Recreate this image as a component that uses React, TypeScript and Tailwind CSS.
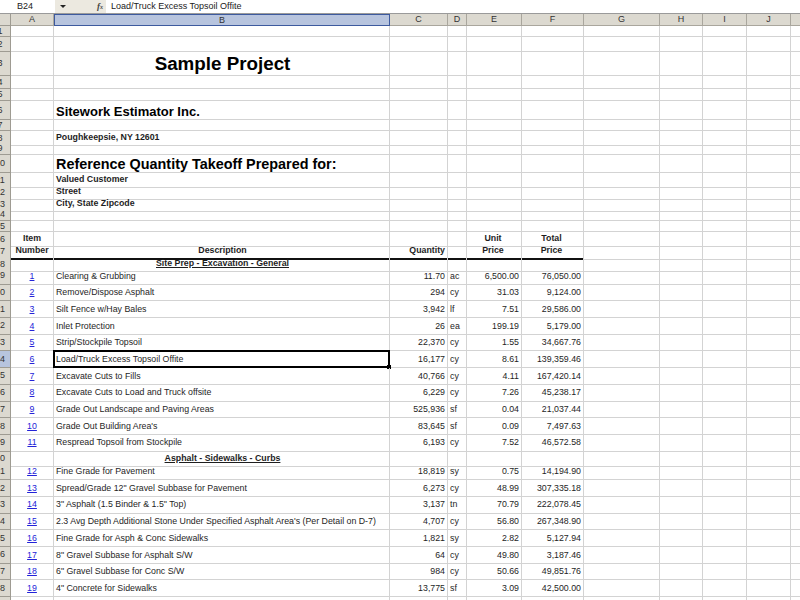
import React from 'react';

type Item = {
  n: number;
  desc: string;
  qty: string;
  unit: string;
  price: string;
  total: string;
};

const sitePrep: Item[] = [
  { n: 1, desc: 'Clearing & Grubbing', qty: '11.70', unit: 'ac', price: '6,500.00', total: '76,050.00' },
  { n: 2, desc: 'Remove/Dispose Asphalt', qty: '294', unit: 'cy', price: '31.03', total: '9,124.00' },
  { n: 3, desc: 'Silt Fence w/Hay Bales', qty: '3,942', unit: 'lf', price: '7.51', total: '29,586.00' },
  { n: 4, desc: 'Inlet Protection', qty: '26', unit: 'ea', price: '199.19', total: '5,179.00' },
  { n: 5, desc: 'Strip/Stockpile Topsoil', qty: '22,370', unit: 'cy', price: '1.55', total: '34,667.76' },
  { n: 6, desc: 'Load/Truck Excess Topsoil Offite', qty: '16,177', unit: 'cy', price: '8.61', total: '139,359.46' },
  { n: 7, desc: 'Excavate Cuts to Fills', qty: '40,766', unit: 'cy', price: '4.11', total: '167,420.14' },
  { n: 8, desc: 'Excavate Cuts to Load and Truck offsite', qty: '6,229', unit: 'cy', price: '7.26', total: '45,238.17' },
  { n: 9, desc: 'Grade Out Landscape and Paving Areas', qty: '525,936', unit: 'sf', price: '0.04', total: '21,037.44' },
  { n: 10, desc: "Grade Out Building Area's", qty: '83,645', unit: 'sf', price: '0.09', total: '7,497.63' },
  { n: 11, desc: 'Respread Topsoil from Stockpile', qty: '6,193', unit: 'cy', price: '7.52', total: '46,572.58' },
];

const asphalt: Item[] = [
  { n: 12, desc: 'Fine Grade for Pavement', qty: '18,819', unit: 'sy', price: '0.75', total: '14,194.90' },
  { n: 13, desc: 'Spread/Grade 12" Gravel Subbase for Pavement', qty: '6,273', unit: 'cy', price: '48.99', total: '307,335.18' },
  { n: 14, desc: '3" Asphalt (1.5 Binder & 1.5" Top)', qty: '3,137', unit: 'tn', price: '70.79', total: '222,078.45' },
  { n: 15, desc: "2.3 Avg Depth Additional Stone Under Specified Asphalt Area's (Per Detail on D-7)", qty: '4,707', unit: 'cy', price: '56.80', total: '267,348.90' },
  { n: 16, desc: 'Fine Grade for Asph & Conc Sidewalks', qty: '1,821', unit: 'sy', price: '2.82', total: '5,127.94' },
  { n: 17, desc: '8" Gravel Subbase for Asphalt S/W', qty: '64', unit: 'cy', price: '49.80', total: '3,187.46' },
  { n: 18, desc: '6" Gravel Subbase for Conc S/W', qty: '984', unit: 'cy', price: '50.66', total: '49,851.76' },
  { n: 19, desc: '4" Concrete for Sidewalks', qty: '13,775', unit: 'sf', price: '3.09', total: '42,500.00' },
];

const grid =
  'grid grid-cols-[11px_43px_336px_58px_19px_55px_62px_76px_43px_44px_44px_44px]';
const cell = 'flex items-end whitespace-nowrap border-r border-b border-[#d3d3d3] pb-[1px]';
const thick = 'flex items-end whitespace-nowrap border-r border-[#d3d3d3] border-b-2 border-b-[#111] pb-[1px]';

type RowProps = {
  n: number;
  h: string;
  a?: React.ReactNode;
  b?: React.ReactNode;
  c?: React.ReactNode;
  d?: React.ReactNode;
  e?: React.ReactNode;
  f?: React.ReactNode;
  bCls?: string;
  aCls?: string;
  cCls?: string;
  eCls?: string;
  fCls?: string;
  heavy?: boolean;
  selected?: boolean;
};

function Row(p: RowProps) {
  const base = p.heavy ? thick : cell;
  return (
    <div className={`${grid} ${p.h}`}>
      <div
        className={`flex items-center overflow-hidden border-r border-b border-[#9e9b92] ${p.selected ? 'bg-[#b7c4de]' : 'bg-[#dcd9d0]'}`}
      >
        <div className="-ml-[10px] w-[20px] shrink-0 text-center text-[9px] leading-none text-[#333]">
          {p.n}
        </div>
      </div>
      <div className={`${base} justify-center ${p.aCls ?? ''}`}>{p.a}</div>
      <div className={`${base} relative pl-[2px] ${p.bCls ?? ''}`}>
        {p.b}
        {p.selected && (
          <div className="pointer-events-none absolute -left-[1px] -top-[1px] -right-[1px] -bottom-[1px] border-2 border-black">
            <div className="absolute -right-[3px] -bottom-[3px] h-[4px] w-[4px] bg-black" />
          </div>
        )}
      </div>
      <div className={`${base} justify-end pr-[2px] ${p.cCls ?? ''}`}>{p.c}</div>
      <div className={`${base} pl-[2px]`}>{p.d}</div>
      <div className={`${base} justify-end pr-[2px] ${p.eCls ?? ''}`}>{p.e}</div>
      <div className={`${base} justify-end pr-[2px] ${p.fCls ?? ''}`}>{p.f}</div>
      <div className={cell} />
      <div className={cell} />
      <div className={cell} />
      <div className={cell} />
      <div className={cell} />
    </div>
  );
}

function ItemRow({ item, row, selected }: { item: Item; row: number; selected?: boolean }) {
  return (
    <Row
      n={row}
      h="h-[16.7px]"
      selected={selected}
      a={<span className="text-[#2323d8] underline">{item.n}</span>}
      b={item.desc}
      c={item.qty}
      d={item.unit}
      e={item.price}
      f={item.total}
    />
  );
}

const colLetters = ['A', 'B', 'C', 'D', 'E', 'F', 'G', 'H', 'I', 'J', 'K'];

export default function App() {
  return (
    <div className="h-[600px] w-[800px] overflow-hidden bg-white font-['Liberation_Sans',Arial,sans-serif] text-[8.8px] text-[#1e1e1e]">
      {/* formula bar */}
      <div className="flex h-[14px] border-b border-[#9a9a9a] bg-[#ece9e0] text-[9px] leading-none">
        <div className="flex w-[55px] items-center bg-white pl-[17px] text-[#222]">B24</div>
        <div className="flex w-[40px] items-start pt-[5px] pl-[5px]">
          <div className="h-0 w-0 border-x-[3px] border-t-[3px] border-x-transparent border-t-[#222]" />
        </div>
        <div className="flex w-[11px] items-center pl-[2px] font-['Liberation_Serif',serif] text-[9px] font-bold italic text-[#444]">
          f<span className="text-[6px]">x</span>
        </div>
        <div className="flex flex-1 items-center bg-white pl-[5px] text-[#222]">
          Load/Truck Excess Topsoil Offite
        </div>
      </div>

      {/* column headers */}
      <div className={`${grid} h-[12px] text-[9px] leading-none text-[#333]`}>
        <div className="border-r border-b border-[#9e9b92] bg-[#dcd9d0]" />
        {colLetters.map((l) => (
          <div
            key={l}
            className={
              l === 'B'
                ? 'flex items-center justify-center border border-[#3d5a9e] bg-[#b7c4de]'
                : 'flex items-center justify-center border-r border-b border-[#a9a69d] bg-[#dcd9d0]'
            }
          >
            {l}
          </div>
        ))}
      </div>

      <Row n={1} h="h-[11px]" />
      <Row n={2} h="h-[15px]" />
      <Row
        n={3}
        h="h-[24px]"
        bCls="pb-0"
        b={<span className="w-full text-center text-[18.8px] font-bold leading-none text-black">Sample Project</span>}
      />
      <Row n={4} h="h-[13px]" />
      <Row n={5} h="h-[12px]" />
      <Row
        n={6}
        h="h-[19px]"
        bCls="pb-0"
        b={<span className="text-[13px] font-bold leading-none text-black">Sitework Estimator Inc.</span>}
      />
      <Row n={7} h="h-[11px]" />
      <Row n={8} h="h-[12px]" b={<span className="font-bold">Poughkeepsie, NY 12601</span>} />
      <Row n={9} h="h-[12px]" />
      <Row
        n={10}
        h="h-[18px]"
        bCls="pb-0"
        b={
          <span className="text-[14.4px] font-bold leading-none text-black">
            Reference Quantity Takeoff Prepared for:
          </span>
        }
      />
      <Row n={11} h="h-[12px]" b={<span className="font-bold">Valued Customer</span>} />
      <Row n={12} h="h-[12px]" b={<span className="font-bold">Street</span>} />
      <Row n={13} h="h-[12px]" b={<span className="font-bold">City, State Zipcode</span>} />
      <Row n={14} h="h-[12px]" />
      <Row n={15} h="h-[11px]" />
      <Row
        n={16}
        h="h-[12px]"
        a={<span className="font-bold">Item</span>}
        e={<span className="w-full text-center font-bold">Unit</span>}
        eCls="pr-0"
        f={<span className="w-full text-center font-bold">Total</span>}
        fCls="pr-0"
      />
      <Row
        n={17}
        h="h-[13px]"
        heavy
        a={<span className="font-bold">Number</span>}
        b={<span className="w-full text-center font-bold">Description</span>}
        c={<span className="font-bold">Quantity</span>}
        cCls="pr-0"
        e={<span className="w-full text-center font-bold">Price</span>}
        f={<span className="w-full text-center font-bold">Price</span>}
      />
      <Row
        n={18}
        h="h-[11px]"
        b={<span className="w-full text-center font-bold underline">Site Prep - Excavation - General</span>}
      />
      {sitePrep.map((it, i) => (
        <ItemRow key={it.n} item={it} row={19 + i} selected={it.n === 6} />
      ))}
      <Row
        n={30}
        h="h-[12px]"
        b={<span className="w-full text-center font-bold underline">Asphalt - Sidewalks - Curbs</span>}
      />
      {asphalt.map((it, i) => (
        <ItemRow key={it.n} item={it} row={31 + i} />
      ))}
      <Row n={39} h="h-[16.7px]" />
    </div>
  );
}
